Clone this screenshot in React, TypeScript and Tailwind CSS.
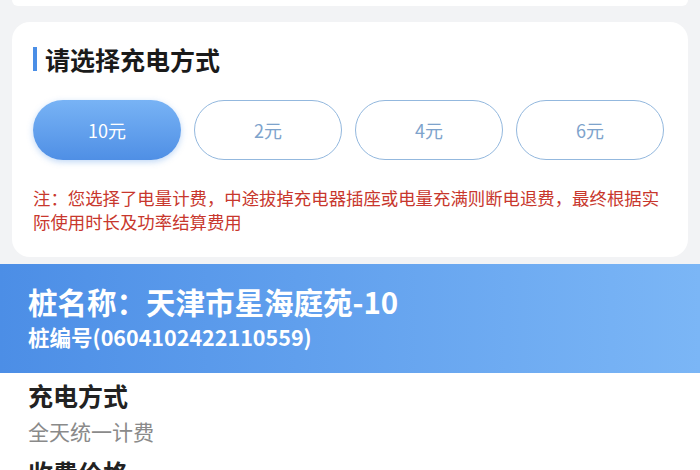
import React, { useState } from 'react';

const OPTIONS = ['10元', '2元', '4元', '6元'];

const App: React.FC = () => {
  const [selected, setSelected] = useState(0);

  return (
    <div
      className="w-[700px] h-[470px] overflow-hidden bg-[#f2f3f5]"
      style={{ fontFamily: '"Noto Sans CJK SC", "Noto Sans", sans-serif' }}
    >
      {/* bottom edge of previous card */}
      <div className="mx-3 h-[6px] bg-white rounded-b-[18px]" />

      <div className="mx-3 mt-4 bg-white rounded-[18px] pl-[21px] pr-[20px] pt-[22px] pb-[23px]">
        <div className="flex items-center h-[30px]">
          <div className="w-[4px] h-[24px] bg-[#4a8ee6]" />
          <h2 className="ml-[8px] text-[25px] font-bold text-[#1a1a1a] leading-none">请选择充电方式</h2>
        </div>

        <div className="mt-[26px] flex gap-[13px]">
          {OPTIONS.map((o, i) => (
            <button
              key={o}
              onClick={() => setSelected(i)}
              className={
                i === selected
                  ? 'w-[148px] h-[60px] rounded-full bg-gradient-to-b from-[#78b3f5] to-[#4f8fe5] text-white text-[18px] shadow-[0_2px_6px_rgba(74,142,230,0.35)]'
                  : 'w-[148px] h-[60px] rounded-full bg-white border-[1.5px] border-[#93b8de] text-[#7ea3cc] text-[18px]'
              }
            >
              {o}
            </button>
          ))}
        </div>

        <p className="mt-[26px] text-[17.4px] leading-[24px] text-[#c8372d]">
          注：您选择了电量计费，中途拔掉充电器插座或电量充满则断电退费，最终根据实际使用时长及功率结算费用
        </p>
      </div>

      <div className="mt-[7px] h-[109px] bg-gradient-to-r from-[#4c8ee6] to-[#7bb6f6] px-[28px] pt-[19px] text-white">
        <div className="text-[29.5px] font-bold leading-[36px]">桩名称：天津市星海庭苑-10</div>
        <div className="text-[21.5px] font-bold leading-[30px] mt-[3px]">桩编号(0604102422110559)</div>
      </div>

      <div className="bg-white px-[28px] pt-[6px]">
        <div className="text-[25px] font-bold text-[#222] leading-[32px]">充电方式</div>
        <div className="text-[21px] text-[#8a8a8a] leading-[30px] mt-[5px]">全天统一计费</div>
        <div className="text-[25px] font-bold text-[#222] leading-[32px] mt-[10px]">收费价格</div>
      </div>
    </div>
  );
};

export default App;
